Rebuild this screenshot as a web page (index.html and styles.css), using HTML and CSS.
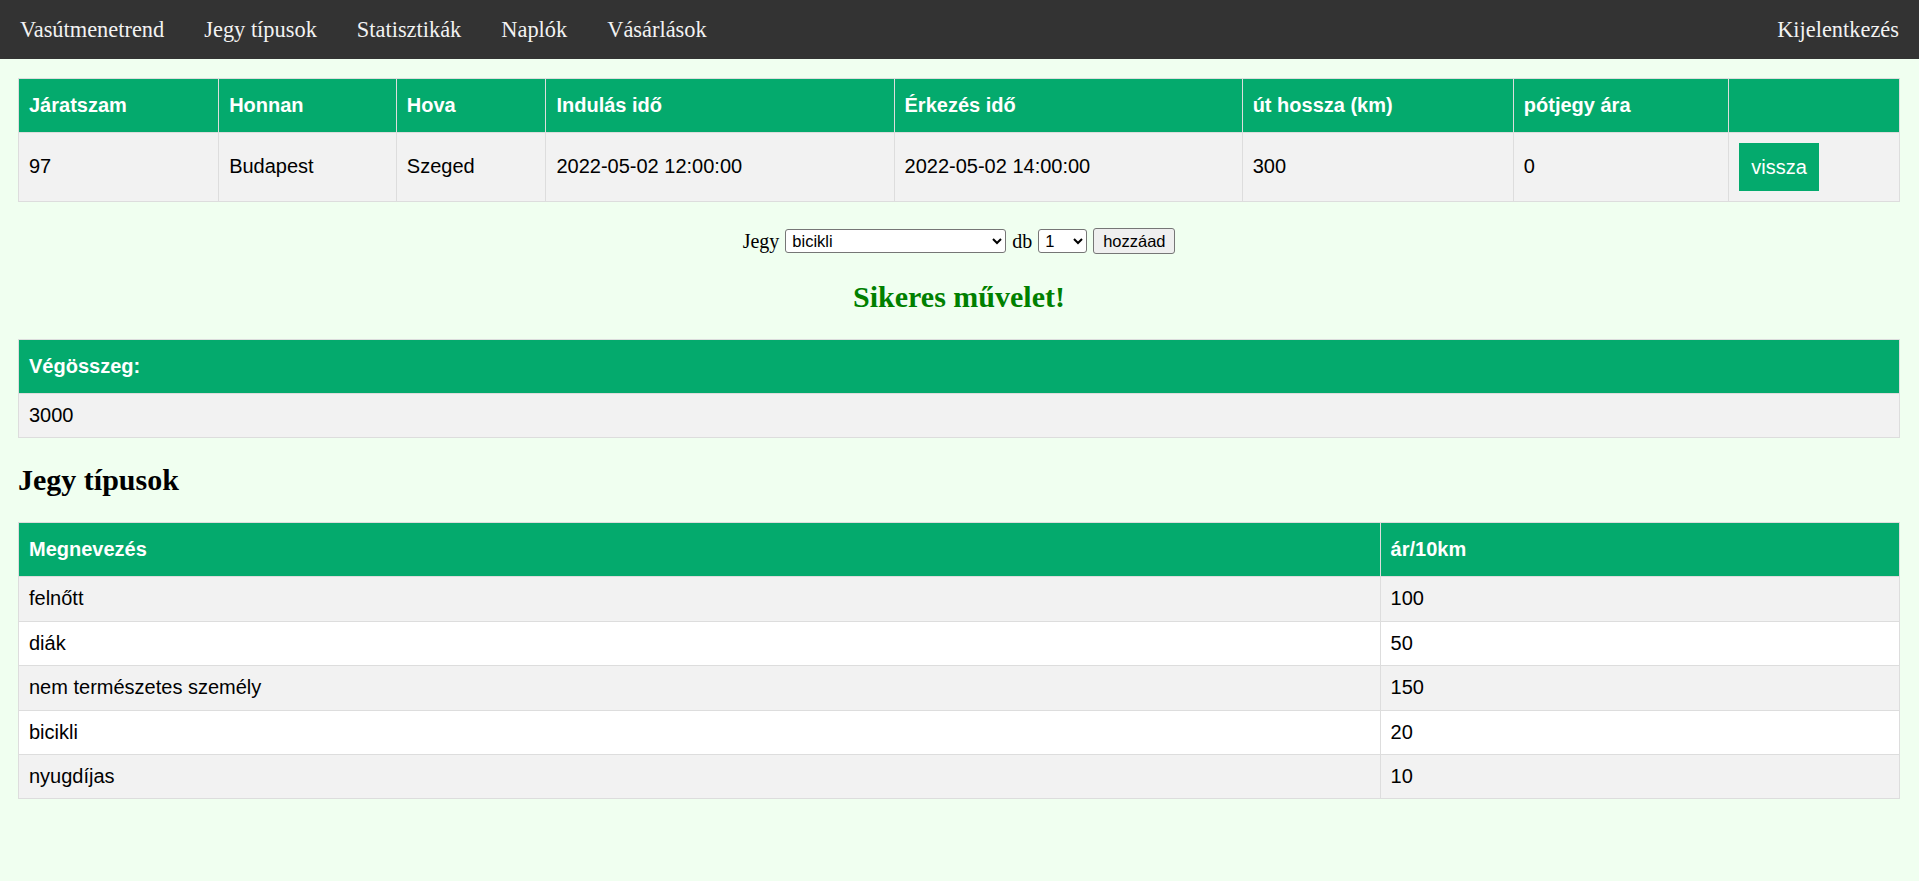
FILE: index.html
```html
<!DOCTYPE html>
<html lang="hu">
<head>
<meta charset="utf-8">
<title>Vásárlás</title>
<link rel="stylesheet" href="styles.css">
</head>
<body>
<nav class="topnav">
  <a href="#" class="nav-link">Vasútmenetrend</a>
  <a href="#" class="nav-link">Jegy típusok</a>
  <a href="#" class="nav-link">Statisztikák</a>
  <a href="#" class="nav-link">Naplók</a>
  <a href="#" class="nav-link">Vásárlások</a>
  <a href="#" class="nav-link nav-right">Kijelentkezés</a>
</nav>
<main class="content">
  <table class="data-table">
    <thead>
      <tr>
        <th>Járatszam</th>
        <th>Honnan</th>
        <th>Hova</th>
        <th>Indulás idő</th>
        <th>Érkezés idő</th>
        <th>út hossza (km)</th>
        <th>pótjegy ára</th>
        <th></th>
      </tr>
    </thead>
    <tbody>
      <tr>
        <td>97</td>
        <td>Budapest</td>
        <td>Szeged</td>
        <td>2022-05-02 12:00:00</td>
        <td>2022-05-02 14:00:00</td>
        <td>300</td>
        <td>0</td>
        <td><button class="btn-green" type="button">vissza</button></td>
      </tr>
    </tbody>
  </table>

  <form class="buy-form">
    <span class="form-label">Jegy</span>
    <select class="sel-type">
      <option>felnőtt</option>
      <option>diák</option>
      <option>nem természetes személy</option>
      <option selected>bicikli</option>
      <option>nyugdíjas</option>
    </select>
    <span class="form-label">db</span>
    <select class="sel-count">
      <option selected>1</option>
      <option>2</option>
      <option>3</option>
      <option>4</option>
      <option>5</option>
    </select>
    <button class="btn-add" type="button">hozzáad</button>
  </form>

  <h2 class="success">Sikeres művelet!</h2>

  <table class="data-table">
    <thead>
      <tr><th>Végösszeg:</th></tr>
    </thead>
    <tbody>
      <tr><td>3000</td></tr>
    </tbody>
  </table>

  <h2 class="section-title">Jegy típusok</h2>

  <table class="data-table">
    <thead>
      <tr><th>Megnevezés</th><th>ár/10km</th></tr>
    </thead>
    <tbody>
      <tr><td>felnőtt</td><td>100</td></tr>
      <tr><td>diák</td><td>50</td></tr>
      <tr><td>nem természetes személy</td><td>150</td></tr>
      <tr><td>bicikli</td><td>20</td></tr>
      <tr><td>nyugdíjas</td><td>10</td></tr>
    </tbody>
  </table>
</main>
</body>
</html>
```

FILE: styles.css
```css
html, body {
  margin: 0;
  padding: 0;
}

body {
  background: #f0fff0;
  font-family: "Liberation Serif", "Times New Roman", serif;
  font-size: 20px;
  color: #000;
}

.topnav {
  display: flex;
  background: #333;
  height: 59px;
}

.nav-link {
  display: block;
  color: #f2f2f2;
  text-decoration: none;
  font-size: 22.4px;
  line-height: 25px;
  padding: 17px 20px;
}

.nav-right {
  margin-left: auto;
}

.content {
  padding: 19px 19px 0 18px;
}

.data-table {
  width: 100%;
  border-collapse: collapse;
  font-family: "Liberation Sans", Arial, sans-serif;
  font-size: 20px;
  line-height: 23px;
}

.data-table th,
.data-table td {
  border: 1px solid #ddd;
  padding: 10px;
}

.data-table td {
  line-height: 23.4px;
}

.data-table th {
  padding-top: 15px;
  padding-bottom: 15px;
  text-align: left;
  background: #04AA6D;
  color: #fff;
  font-weight: bold;
}

.data-table tbody tr:nth-child(odd) {
  background: #f2f2f2;
}

.data-table tbody tr:nth-child(even) {
  background: #fff;
}

.btn-green {
  display: block;
  background: #04AA6D;
  color: #fff;
  border: none;
  font-family: "Liberation Sans", Arial, sans-serif;
  font-size: 20px;
  line-height: 23px;
  padding: 12.5px 12.5px;
  margin: 0;
  cursor: pointer;
}

.buy-form {
  display: flex;
  justify-content: center;
  align-items: center;
  gap: 6px;
  height: 26px;
  margin: 26px 0 0 0;
}

.form-label {
  font-size: 20px;
  line-height: 23px;
}

.sel-type,
.sel-count {
  box-sizing: border-box;
  height: 24px;
  font-family: "Liberation Sans", Arial, sans-serif;
  font-size: 16.5px;
  background: #fff;
  color: #000;
  border: 1px solid #767676;
  border-radius: 3px;
  margin: 0;
  padding: 0 2px;
}

.sel-type {
  width: 221px;
}

.sel-count {
  width: 49px;
}

.btn-add {
  box-sizing: border-box;
  width: 82px;
  height: 26px;
  font-family: "Liberation Sans", Arial, sans-serif;
  font-size: 16.5px;
  background: #efefef;
  color: #000;
  border: 1px solid #767676;
  border-radius: 3px;
  margin: 0;
  padding: 0 6px;
}

.success {
  color: #008000;
  text-align: center;
  font-size: 30px;
  margin: 26px 0 25px 0;
}

.section-title {
  font-size: 30px;
  margin: 25px 0;
}
```
